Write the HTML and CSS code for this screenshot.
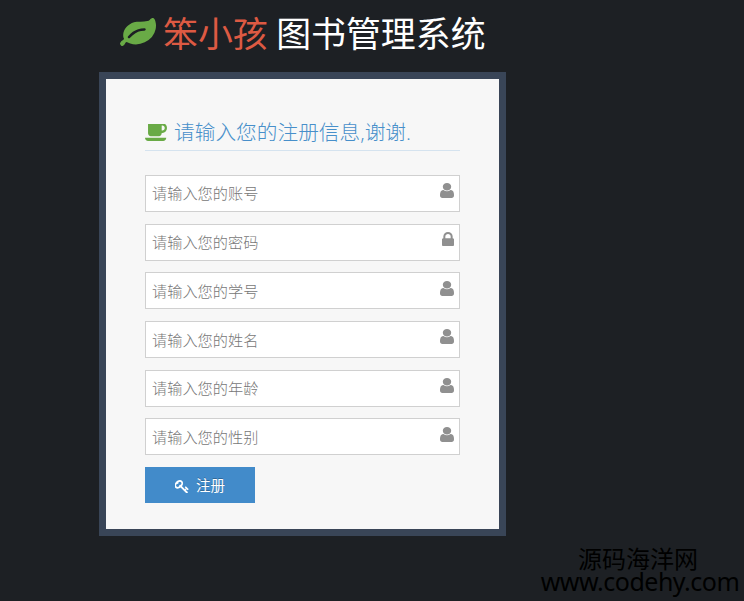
FILE: index.html
```html
<!DOCTYPE html>
<html lang="zh-CN">
<head>
<meta charset="utf-8">
<title>图书管理系统</title>
<link rel="stylesheet" href="styles.css">
</head>
<body>
<svg class="defs" aria-hidden="true">
  <symbol id="user" viewBox="256 128 1280 1536" preserveAspectRatio="none"><path d="M1536 1399q0 109-62.5 187t-150.5 78h-854q-88 0-150.5-78t-62.5-187q0-85 8.5-160.5t31.5-152 58.5-131 94-89 134.5-34.5q131 128 313 128t313-128q76 0 134.5 34.5t94 89 58.5 131 31.5 152 8.5 160.5zm-256-887q0 159-112.5 271.5t-271.5 112.5-271.5-112.5-112.5-271.5 112.5-271.5 271.5-112.5 271.5 112.5 112.5 271.5z"/></symbol>
  <symbol id="lock" viewBox="320 128 1152 1408" preserveAspectRatio="none"><path d="M640 768h512v-192q0-106-75-181t-181-75-181 75-75 181v192zm832 96v576q0 40-28 68t-68 28h-960q-40 0-68-28t-28-68v-576q0-40 28-68t68-28h32v-192q0-184 132-316t316-132 316 132 132 316v192h32q40 0 68 28t28 68z"/></symbol>
</svg>
<main class="page">
  <h1 class="brand">
    <svg class="leaf" viewBox="0 128 1792 1408" preserveAspectRatio="none"><path d="M1280 704q0-26-19-45t-45-19q-172 0-318 49.5t-259.5 134-235.5 219.5q-19 21-19 45 0 26 19 45t45 19q24 0 45-19 27-24 74-71t67-66q137-124 268.5-176t313.5-52q26 0 45-19t19-45zm512-198q0 95-20 193-46 224-184.5 383t-357.5 268q-214 108-438 108-148 0-286-47-15-5-88-42t-96-37q-16 0-39.5 32t-45 70-52.5 70-60 32q-43 0-63.5-17.5t-45.5-59.5q-2-4-6-11t-5.5-10-3-9.5-1.5-13.5q0-35 31-73.5t68-65.5 68-56 31-48q0-4-14-38t-16-44q-9-51-9-104 0-115 43.5-220t119-184.5 170.5-139 204-95.5q55-18 145-25.5t179.5-9 178.5-6 163.5-24 113.5-56.5l29.5-29.5 29.5-28 27-20 36.5-16 43.5-4.5q39 0 70.5 46t47.5 112 24 124 8 96z"/></svg>
    <span class="brand-name">笨小孩</span>
    <span class="brand-title">图书管理系统</span>
  </h1>
  <form class="card">
    <h2 class="heading">
      <svg class="cup" viewBox="0 256 1856 1344" preserveAspectRatio="none"><path d="M1664 576q0-80-56-136t-136-56h-64v384h64q80 0 136-56t56-136zm-1664 768h1792q0 106-75 181t-181 75h-1280q-106 0-181-75t-75-181zm1856-768q0 159-112.5 271.5t-271.5 112.5h-64v32q0 92-66 158t-158 66h-704q-92 0-158-66t-66-158v-736q0-26 19-45t45-19h1152q159 0 271.5 112.5t112.5 271.5z"/></svg>
      <span>请输入您的注册信息,谢谢.</span>
    </h2>
    <div class="fields">
      <label class="field"><input type="text" placeholder="请输入您的账号"><svg class="icon"><use href="#user"/></svg></label>
      <label class="field"><input type="password" placeholder="请输入您的密码"><svg class="icon icon-lock"><use href="#lock"/></svg></label>
      <label class="field"><input type="text" placeholder="请输入您的学号"><svg class="icon"><use href="#user"/></svg></label>
      <label class="field"><input type="text" placeholder="请输入您的姓名"><svg class="icon"><use href="#user"/></svg></label>
      <label class="field"><input type="text" placeholder="请输入您的年龄"><svg class="icon"><use href="#user"/></svg></label>
      <label class="field"><input type="text" placeholder="请输入您的性别"><svg class="icon"><use href="#user"/></svg></label>
    </div>
    <button class="submit" type="button">
      <svg class="key" viewBox="64 128 1664 1536"><path d="M832 512q0-80-56-136t-136-56-136 56-56 136q0 42 19 83-41-19-83-19-80 0-136 56t-56 136 56 136 136 56 136-56 56-136q0-42-19-83 41 19 83 19 80 0 136-56t56-136zm851 704q0 17-49 66t-66 49q-9 0-28.5-16t-36.5-33-38.5-40-24.5-26l-96 96 220 220q28 28 28 68 0 42-39 81t-81 39q-40 0-68-28l-671-671q-176 131-365 131-163 0-265.5-102.5t-102.5-265.5q0-160 95-313t248-248 313-95q163 0 265.5 102.5t102.5 265.5q0 189-131 365l355 355 96-96q-3-3-26-24.5t-40-38.5-33-36.5-16-28.5q0-17 49-66t66-49q13 0 23 10 6 6 46 44.5t82 79.5 86.5 86 73 78 28.5 41z"/></svg>
      <span>注册</span>
    </button>
  </form>
</main>
<div class="watermark"><div class="mark-name">源码海洋网</div><div class="mark-url">www.codehy.com</div></div>
</body>
</html>
```
FILE: styles.css
```css
* { box-sizing: border-box; }
body {
  margin: 0;
  height: 601px;
  overflow: hidden;
  background: #1d2024;
  font-family: "Open Sans", "Noto Sans CJK SC", sans-serif;
}
svg { fill: currentColor; flex: none; }
.defs { position: absolute; width: 0; height: 0; }
.page { width: 407px; margin-left: 99px; }
.brand {
  display: flex;
  height: 72px;
  margin: 0;
  padding: 8px 0 12px 21px;
  font-size: 34.9px;
  line-height: 52px;
  font-weight: 400;
  white-space: nowrap;
}
.leaf { width: 36px; height: 28px; margin: 10px 7px 0 0; color: #69aa46; }
.brand-name { color: #dd5a43; margin-right: 8.5px; }
.brand-title { color: #fff; }
.card {
  height: 464px;
  border: 7px solid #394557;
  background: #f7f7f7;
  padding: 32px 39px 0;
}
.heading {
  display: flex;
  height: 40px;
  margin: 0 0 24px;
  border-bottom: 1px solid #d5e3ef;
  color: #478fca;
  font-size: 20.7px;
  font-weight: 300;
  line-height: 42px;
  white-space: nowrap;
}
.cup { width: 22px; height: 17px; margin: 13px 7px 0 0; color: #69aa46; }
.fields { display: grid; gap: 11.8px; }
.field { display: block; position: relative; height: 36.9px; }
.field input {
  display: block;
  width: 100%;
  height: 100%;
  padding: 0 6px;
  border: 1px solid #d0d0d0;
  border-radius: 0;
  background: #fff;
  font: 300 15.2px "Open Sans", "Noto Sans CJK SC", sans-serif;
}
.field input::placeholder { color: #777; opacity: 1; }
.icon { position: absolute; right: 6px; top: 8.3px; width: 14px; height: 15px; color: #909090; }
.icon-lock { width: 12px; height: 14px; }
.submit {
  display: flex;
  align-items: center;
  justify-content: center;
  gap: 7px;
  width: 110px;
  height: 36px;
  margin-top: 12px;
  padding: 2px 0 0;
  border: 0;
  background: #428bca;
  color: #fff;
  font: 400 14.5px/34px "Open Sans", "Noto Sans CJK SC", sans-serif;
  text-shadow: 0 -1px 0 rgba(0, 0, 0, .25);
}
.key { width: 14px; height: 13px; }
.watermark {
  position: absolute;
  right: 4px;
  bottom: 9px;
  width: 200px;
  color: #000;
  text-align: center;
  white-space: nowrap;
}
.mark-name { font-size: 24px; line-height: 24px; padding-right: 4px; }
.mark-url { font-family: "Noto Sans", sans-serif; font-size: 25px; line-height: 21px; letter-spacing: -.5px; }
```
